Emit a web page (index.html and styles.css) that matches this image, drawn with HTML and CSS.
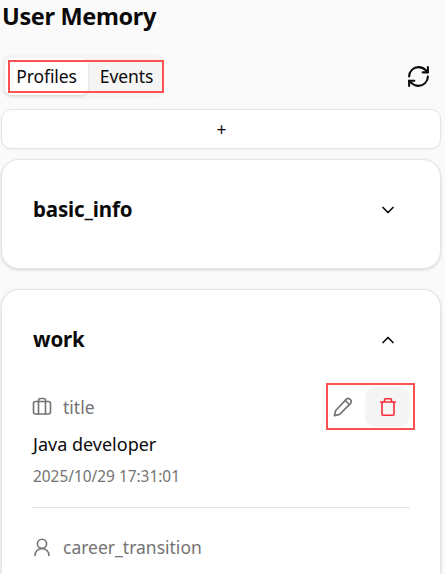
FILE: index.html
```html
<!DOCTYPE html>
<html lang="en">
<head>
  <meta charset="UTF-8">
  <meta name="viewport" content="width=device-width, initial-scale=1.0">
  <title>User Memory</title>
  <link rel="stylesheet" href="styles.css">
</head>
<body>
  <main class="page">
    <h1 class="page-title">User Memory</h1>

    <div class="toolbar">
      <div class="tabs">
        <button class="tab active">Profiles</button>
        <button class="tab">Events</button>
        <div class="mark mark-tabs"></div>
      </div>
      <button class="refresh" aria-label="Refresh">
        <svg class="icon" width="25" height="25" viewBox="0 0 24 24">
          <path d="M3 12a9 9 0 0 1 9-9 9.75 9.75 0 0 1 6.74 2.74L21 8"/>
          <path d="M21 3v5h-5"/>
          <path d="M21 12a9 9 0 0 1-9 9 9.75 9.75 0 0 1-6.74-2.74L3 16"/>
          <path d="M8 16H3v5"/>
        </svg>
      </button>
    </div>

    <button class="add">+</button>

    <section class="card">
      <div class="card-header">
        <h2 class="card-title">basic_info</h2>
        <svg class="icon" width="20" height="20" viewBox="0 0 24 24"><path d="m6 9 6 6 6-6"/></svg>
      </div>
    </section>

    <section class="card open">
      <div class="card-header">
        <h2 class="card-title">work</h2>
        <svg class="icon" width="20" height="20" viewBox="0 0 24 24"><path d="m18 15-6-6-6 6"/></svg>
      </div>

      <div class="item">
        <div class="item-head">
          <svg class="icon thin" width="20" height="20" viewBox="0 0 20 20">
            <rect x="1.500" y="4.500" width="17" height="12.500" rx="2"/>
            <path d="M6.500 17V3.500a2 2 0 0 1 2-2h3a2 2 0 0 1 2 2V17"/>
          </svg>
          <span class="item-name">title</span>
          <div class="actions">
            <button class="action edit" aria-label="Edit">
              <svg class="icon thin" width="20" height="20" viewBox="0 0 20 20">
                <path d="M13 2.600a2.850 2.850 0 1 1 4.400 4L6.600 17.400 1.400 18.700l1.300-5.200z"/>
                <path d="m12.300 3.400 4.300 4.300"/>
              </svg>
            </button>
            <button class="action danger" aria-label="Delete">
              <svg class="icon thin" width="20" height="20" viewBox="0 0 20 20">
                <path d="M2.500 5h15M4 5v12.300a1 1 0 0 0 1 1h10a1 1 0 0 0 1-1V5M6.500 5V2.700a1 1 0 0 1 1-1h5a1 1 0 0 1 1 1V5"/>
              </svg>
            </button>
            <div class="mark mark-actions"></div>
          </div>
        </div>
        <p class="item-value">Java developer</p>
        <p class="item-time">2025/10/29 17:31:01</p>
      </div>

      <div class="item last">
        <div class="item-head">
          <svg class="icon thin" width="20" height="20" viewBox="0 0 20 20">
            <circle cx="10" cy="6.800" r="4.600"/>
            <path d="M3 18.500a7 7 0 0 1 14 0"/>
          </svg>
          <span class="item-name">career_transition</span>
        </div>
      </div>
    </section>
  </main>
</body>
</html>
```

FILE: styles.css
```css
* {
  box-sizing: border-box;
}
body {
  margin: 0;
  background: #fafafa;
  color: #0a0a0a;
  font-family: "Noto Sans", "Open Sans", sans-serif;
  font-size: 17.5px;
}
button {
  padding: 0;
  border: none;
  background: none;
  color: inherit;
  font: inherit;
}
h1, h2, p {
  margin: 0;
}
.page {
  width: 440px;
  margin-left: 1px;
}
.page-title {
  height: 54px;
  padding-left: 1px;
  font-size: 23.5px;
  line-height: 33px;
  font-weight: 700;
  letter-spacing: -0.35px;
}
.icon {
  display: block;
  flex: none;
  fill: none;
  stroke: currentColor;
  stroke-width: 2;
  stroke-linecap: round;
  stroke-linejoin: round;
}
.thin {
  stroke-width: 1.6;
}
.toolbar {
  display: flex;
  align-items: center;
  justify-content: space-between;
  height: 45px;
  padding-right: 10px;
}
.tabs {
  position: relative;
  display: flex;
  width: 163px;
  height: 45px;
  padding: 4px;
  border-radius: 10px;
  background: #f5f5f5;
}
.tab {
  flex: none;
  width: 72px;
  padding: 0 0 1px 5px;
  border-radius: 7px;
  letter-spacing: -0.1px;
}
.tab.active {
  width: 83px;
  padding-left: 0;
  background: #fff;
  box-shadow: 0 1px 3px rgba(0, 0, 0, 0.15);
}
/* red callout frames */
.mark {
  position: absolute;
  border: 2px solid #fa5252;
}
.mark-tabs {
  left: 6.5px;
  top: 6px;
  width: 156px;
  height: 33px;
}
.mark-actions {
  left: -7px;
  top: -4px;
  width: 89px;
  height: 47px;
}
.refresh {
  padding-bottom: 1px;
}
.add {
  display: block;
  width: 440px;
  height: 40px;
  margin: 10px 0;
  padding-left: 1px;
  border: 1px solid #e5e5e5;
  border-radius: 10px;
  background: #fff;
  box-shadow: 0 1px 2px rgba(0, 0, 0, 0.05);
}
.card {
  height: 110px;
  padding: 29px 30px;
  border: 1px solid #e5e5e5;
  border-radius: 18px;
  background: #fff;
  box-shadow: 0 1px 3px rgba(0, 0, 0, 0.15);
}
.card.open {
  height: 285px;
  margin-top: 20px;
  padding-bottom: 0;
  border-bottom: none;
  border-radius: 18px 18px 0 0;
}
.card-header {
  display: flex;
  align-items: center;
  justify-content: space-between;
  height: 42px;
  padding: 0 12px 0 1px;
}
.card-title {
  padding-bottom: 2px;
  font-size: 20.5px;
  line-height: 40px;
  font-weight: 700;
  letter-spacing: -0.15px;
}
.item {
  height: 147px;
  padding-top: 26px;
  border-bottom: 1px solid #e5e5e5;
}
.item.last {
  height: 66px;
  padding-top: 19px;
  border-bottom: none;
}
.item-head {
  display: flex;
  align-items: center;
  height: 40px;
  color: #737373;
}
.item-name {
  margin-left: 11px;
}
.actions {
  position: relative;
  display: flex;
  margin-left: auto;
}
.action {
  display: flex;
  align-items: center;
  justify-content: center;
  width: 45px;
  height: 40px;
  border-radius: 10px;
}
.edit {
  width: 32px;
  padding-right: 12px;
}
.danger {
  background: #f5f5f5;
  color: #fb2c36;
}
.item-value {
  padding-left: 1px;
  font-size: 18px;
  line-height: 34px;
}
.item-time {
  padding-left: 1px;
  font-size: 15.4px;
  line-height: 31px;
  color: #737373;
}
```
